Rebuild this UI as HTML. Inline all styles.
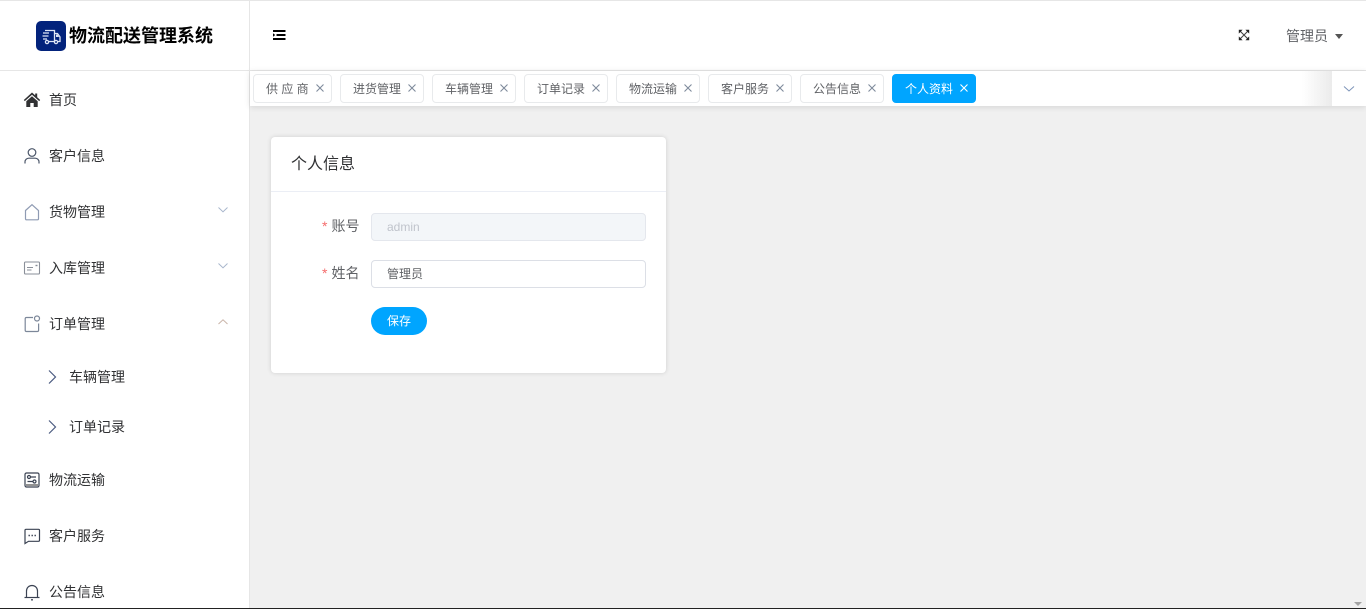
<!DOCTYPE html>
<html lang="zh-CN">
<head>
<meta charset="utf-8">
<title>物流配送管理系统</title>
<style>
*{box-sizing:border-box;margin:0;padding:0}
html,body{width:1366px;height:609px;overflow:hidden;background:#f0f0f0;font-family:"Liberation Sans","Noto Sans CJK SC",sans-serif;}
.abs{position:absolute;white-space:nowrap}
#top{position:absolute;left:0;top:0;width:1366px;height:71px;background:#fff;border-top:1px solid #e6e6e6;border-bottom:1px solid #e6e6e6}
#side{position:absolute;left:0;top:71px;width:250px;height:538px;background:#fff;border-right:1px solid #e6e6e6}
#vline{position:absolute;left:249px;top:0;width:1px;height:71px;background:#e6e6e6}
.m{position:absolute;left:49px;font-size:14px;line-height:20px;color:#303133;white-space:nowrap}
.ic{position:absolute;left:23px;width:18px;height:18px}
.ch{position:absolute;left:217px;width:12px;height:8px}
.sa{position:absolute;left:47px;width:10px;height:16px}
#tabs{position:absolute;left:250px;top:71px;width:1116px;height:35px;background:#fff;box-shadow:0 1px 6px rgba(0,0,0,.12)}
.t{position:absolute;top:3px;height:29px;background:#fff;border:1px solid #e8eaec;border-radius:4px;font-size:12px;line-height:27px;color:#606266;white-space:nowrap}
.t span{position:absolute;left:12px;top:1px}
.t svg{position:absolute;top:9px;width:8px;height:8px}
#card{position:absolute;left:271px;top:137px;width:395px;height:236px;background:#fff;border-radius:4px;box-shadow:0 0 5px rgba(0,0,0,.14)}
.in{position:absolute;left:100px;width:275px;height:28px;border-radius:4px;font-size:12px;line-height:26px;padding-left:15px}
.lb{position:absolute;font-size:14px;line-height:20px;color:#606266;white-space:nowrap;left:51px}
.lb i{font-style:normal;color:#f56c6c;font-size:14px;margin-right:4px}
</style>
</head>
<body>
<div id="top"></div>
<div id="vline"></div>

<!-- logo -->
<div class="abs" style="left:36px;top:21px;width:30px;height:30px;background:#03237c;border-radius:5px">
<svg width="30" height="30" viewBox="0 0 30 30" fill="none" stroke="#dfe6f5" stroke-width="1.3">
<path d="M9 9.500h9.500v11H13M18.500 12.500h3l2.500 3.500v4.500h-2M18.500 20.500h-.5M7 12h6M6.500 15h6M7 18h4" />
<circle cx="11" cy="21" r="1.600"/><circle cx="20" cy="21" r="1.600"/>
<path d="M20 13.500h1.500l1.500 2.500h-3z" fill="#dfe6f5" stroke="none"/>
</svg>
</div>
<div class="abs" style="left:69px;top:24px;font-size:18px;line-height:24px;font-weight:700;color:#000">物流配送管理系统</div>

<!-- hamburger -->
<svg class="abs" style="left:273px;top:30px" width="13" height="11" viewBox="0 0 13 11">
<path d="M0 0h12.500v2H0zM3.500 4h9v2h-9zM0 8h12.500v2H0z" fill="#000"/><path d="M0 3.200l2.300 1.800L0 6.800z" fill="#000"/>
</svg>

<!-- fullscreen -->
<svg class="abs" style="left:1238px;top:29px" width="12" height="12" viewBox="0 0 12 12" fill="none">
<path d="M2.500 2.500l7 7M9.500 2.500l-7 7" stroke="#444" stroke-width="1.100"/>
<path d="M.8.800h3.800L.8 4.600zM11.200.800v3.800L7.400.800zM.8 11.200V7.400l3.800 3.800zM11.200 11.200H7.400l3.800-3.800z" fill="#222"/>
</svg>

<div class="abs" style="left:1286px;top:26px;font-size:14px;line-height:20px;color:#606266">管理员</div>
<div class="abs" style="left:1335px;top:34px;width:0;height:0;border-left:4.500px solid transparent;border-right:4.500px solid transparent;border-top:5px solid #555"></div>

<!-- sidebar -->
<div id="side">
<svg class="ic" style="top:20px" viewBox="0 0 18 18"><path d="M9 1.500L.8 9l1 1.100L9 3.700l7.200 6.400 1-1.100-3-2.700V2.500h-2v1.900zM3.300 10.300V16h4v-4h3.400v4h4v-5.700L9 5.200z" fill="#303133"/></svg>
<div class="m" style="top:19px">首页</div>

<svg class="ic" style="top:76px" viewBox="0 0 18 18" fill="none" stroke="#4a5568" stroke-width="1.200"><circle cx="9" cy="5.500" r="3.800"/><path d="M2 16.500v-1.500c0-2.200 1.600-3.800 3.800-3.800h6.400c2.200 0 3.800 1.600 3.800 3.800v1.500"/></svg>
<div class="m" style="top:75px">客户信息</div>

<svg class="ic" style="top:132px" viewBox="0 0 18 18" fill="none" stroke="#8f9bb3" stroke-width="1.200"><path d="M2.500 7.500L9 1.700l6.500 5.800v8.300c0 .6-.4 1-1 1h-11c-.6 0-1-.4-1-1z"/></svg>
<div class="m" style="top:131px">货物管理</div>
<svg class="ch" style="top:135px" viewBox="0 0 12 8" fill="none" stroke="#a8b6cc" stroke-width="1"><path d="M1.500 1.500L6 5.800l4.500-4.300"/></svg>

<svg class="ic" style="top:188px" viewBox="0 0 18 18" fill="none" stroke="#8a8f99" stroke-width="1.100"><rect x="1.500" y="3" width="15" height="12" rx="1"/><path d="M4 8.500h6M4 11h4.500"/><path d="M12.500 6.500h2" stroke-width="1.400"/></svg>
<div class="m" style="top:187px">入库管理</div>
<svg class="ch" style="top:191px" viewBox="0 0 12 8" fill="none" stroke="#a8b6cc" stroke-width="1"><path d="M1.500 1.500L6 5.800l4.500-4.300"/></svg>

<svg class="ic" style="top:244px" viewBox="0 0 18 18" fill="none" stroke="#7c8799" stroke-width="1.200"><path d="M10 2.500H3.500c-.8 0-1.300.5-1.300 1.300v11.400c0 .8.500 1.300 1.300 1.300h10.800c.8 0 1.300-.5 1.300-1.300V8.500"/><circle cx="14" cy="3.500" r="2.500"/></svg>
<div class="m" style="top:243px">订单管理</div>
<svg class="ch" style="top:247px" viewBox="0 0 12 8" fill="none" stroke="#c9b4a8" stroke-width="1"><path d="M1.500 6L6 1.800 10.500 6"/></svg>

<svg class="sa" style="top:298px" viewBox="0 0 10 16" fill="none" stroke="#4a5a80" stroke-width="1.200"><path d="M2 1.500L8.500 8 2 14.500"/></svg>
<div class="m" style="left:69px;top:296px">车辆管理</div>
<svg class="sa" style="top:348px" viewBox="0 0 10 16" fill="none" stroke="#4a5a80" stroke-width="1.200"><path d="M2 1.500L8.500 8 2 14.500"/></svg>
<div class="m" style="left:69px;top:346px">订单记录</div>

<svg class="ic" style="top:400px" viewBox="0 0 18 18" fill="none" stroke="#3a4252" stroke-width="1.200"><rect x="2" y="2" width="14" height="14" rx="1.500"/><circle cx="6" cy="6" r="1.500"/><path d="M8 6h5M4.500 10.500h5"/><circle cx="11.500" cy="10.500" r="1.500"/><path d="M3 14h12" stroke="#777" stroke-width="1.600"/></svg>
<div class="m" style="top:399px">物流运输</div>

<svg class="ic" style="top:456px" viewBox="0 0 18 18" fill="none" stroke="#3a4252" stroke-width="1.200"><path d="M2 3.300c0-.6.400-1 1-1h12.500c.6 0 1 .4 1 1v10c0 .6-.4 1-1 1H5.500L2 16.500z"/><path d="M5.500 8.500h1.400M8.500 8.500h1.400M11.500 8.500h1.400" stroke-width="1.400"/></svg>
<div class="m" style="top:455px">客户服务</div>

<svg class="ic" style="top:512px" viewBox="0 0 18 18" fill="none" stroke="#3a4252" stroke-width="1.200"><path d="M3.500 14V8c0-3 2.200-5.500 5.500-5.500S14.500 5 14.500 8v6"/><path d="M1.500 14.500h15" /><path d="M8 16.800h2" stroke-width="1.300"/></svg>
<div class="m" style="top:511px">公告信息</div>
</div>

<!-- tabs -->
<div id="tabs">
<div class="t" style="left:3px;width:79px"><span>供 应 商</span><svg style="left:62px" viewBox="0 0 8 8" fill="none" stroke="#7f8b9c" stroke-width="1.100"><path d="M.5.500l7 7M7.500.500l-7 7"/></svg></div>
<div class="t" style="left:90px;width:84px"><span>进货管理</span><svg style="left:67px" viewBox="0 0 8 8" fill="none" stroke="#7f8b9c" stroke-width="1.100"><path d="M.5.500l7 7M7.500.500l-7 7"/></svg></div>
<div class="t" style="left:182px;width:84px"><span>车辆管理</span><svg style="left:67px" viewBox="0 0 8 8" fill="none" stroke="#7f8b9c" stroke-width="1.100"><path d="M.5.500l7 7M7.500.500l-7 7"/></svg></div>
<div class="t" style="left:274px;width:84px"><span>订单记录</span><svg style="left:67px" viewBox="0 0 8 8" fill="none" stroke="#7f8b9c" stroke-width="1.100"><path d="M.5.500l7 7M7.500.500l-7 7"/></svg></div>
<div class="t" style="left:366px;width:84px"><span>物流运输</span><svg style="left:67px" viewBox="0 0 8 8" fill="none" stroke="#7f8b9c" stroke-width="1.100"><path d="M.5.500l7 7M7.500.500l-7 7"/></svg></div>
<div class="t" style="left:458px;width:84px"><span>客户服务</span><svg style="left:67px" viewBox="0 0 8 8" fill="none" stroke="#7f8b9c" stroke-width="1.100"><path d="M.5.500l7 7M7.500.500l-7 7"/></svg></div>
<div class="t" style="left:550px;width:84px"><span>公告信息</span><svg style="left:67px" viewBox="0 0 8 8" fill="none" stroke="#7f8b9c" stroke-width="1.100"><path d="M.5.500l7 7M7.500.500l-7 7"/></svg></div>
<div class="t" style="left:642px;width:84px;background:#00a5ff;border-color:#00a5ff;color:#fff"><span>个人资料</span><svg style="left:67px" viewBox="0 0 8 8" fill="none" stroke="#fff" stroke-width="1.100"><path d="M.5.500l7 7M7.500.500l-7 7"/></svg></div>
<div style="position:absolute;right:34px;top:0;width:30px;height:35px;background:linear-gradient(to right,rgba(235,235,235,0),#ebebeb)"></div>
<div style="position:absolute;right:0;top:0;width:34px;height:35px;background:#fff"></div>
<svg style="position:absolute;left:1093px;top:14px" width="12" height="8" viewBox="0 0 12 8" fill="none" stroke="#7c93b8" stroke-width="1"><path d="M1 1.500L6 6l5-4.500"/></svg>
</div>

<!-- card -->
<div id="card">
<div class="abs" style="left:20px;top:15px;font-size:16px;line-height:22px;color:#303133;padding-top:2px">个人信息</div>
<div style="position:absolute;left:0;top:54px;width:395px;height:1px;background:#ebeef5"></div>
<div class="lb" style="top:79px"><i>*</i>账号</div>
<div class="in" style="top:76px;background:#f3f6f9;border:1px solid #e4e7ed;color:#c0c4cc">admin</div>
<div class="lb" style="top:126px"><i>*</i>姓名</div>
<div class="in" style="top:123px;background:#fff;border:1px solid #dcdfe6;color:#606266">管理员</div>
<div class="abs" style="left:100px;top:170px;width:56px;height:28px;background:#00a5ff;border-radius:14px;color:#fff;font-size:12px;line-height:28px;text-align:center">保存</div>
</div>

<!-- scrollbar arrow and bottom edge -->
<div class="abs" style="left:1354px;top:602px;width:0;height:0;border-left:4px solid transparent;border-right:4px solid transparent;border-top:4px solid #a3a3a3"></div>
<div style="position:absolute;left:0;top:608px;width:1366px;height:1px;background:#222"></div>
</body>
</html>
